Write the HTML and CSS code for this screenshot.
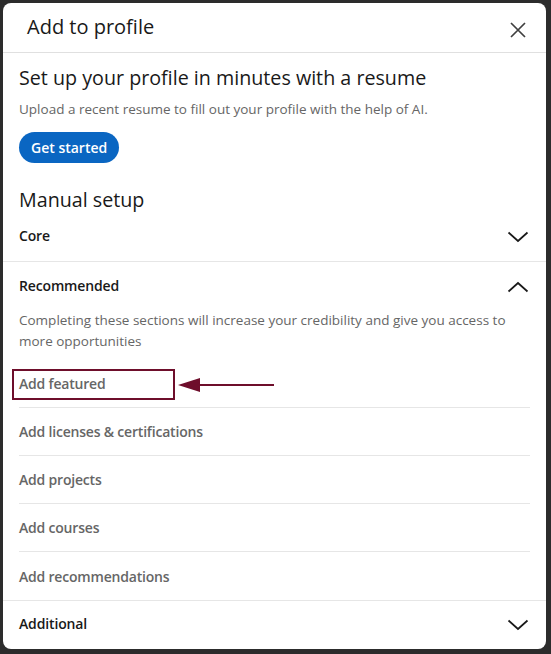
FILE: index.html
```html
<!DOCTYPE html>
<html>
<head>
<meta charset="utf-8">
<link rel="stylesheet" href="styles.css">
</head>
<body>
<div class="backdrop">
  <div class="modal">
    <div class="modal-header">
      <h2 class="modal-title">Add to profile</h2>
      <button class="close-btn" aria-label="Close">
        <svg width="18" height="18" viewBox="0 0 18 18"><path d="M2 2 L16 16 M16 2 L2 16" stroke="#404040" stroke-width="1.7" fill="none"/></svg>
      </button>
    </div>
    <div class="modal-body">
      <section class="resume">
        <h3 class="section-title">Set up your profile in minutes with a resume</h3>
        <p class="muted">Upload a recent resume to fill out your profile with the help of AI.</p>
        <button class="primary-btn">Get started</button>
      </section>
      <h3 class="section-title manual">Manual setup</h3>
      <div class="group core">
        <div class="group-head">
          <span>Core</span>
          <svg class="chev" width="22" height="12" viewBox="0 0 22 12"><path d="M1.5 1.5 L11 10 L20.5 1.5" stroke="#191919" stroke-width="1.7" fill="none"/></svg>
        </div>
      </div>
      <div class="group open">
        <div class="group-head">
          <span>Recommended</span>
          <svg class="chev" width="22" height="12" viewBox="0 0 22 12"><path d="M1.5 10.5 L11 2 L20.5 10.5" stroke="#191919" stroke-width="1.7" fill="none"/></svg>
        </div>
        <p class="muted desc">Completing these sections will increase your credibility and give you access to more opportunities</p>
        <ul class="items">
          <li class="item highlighted">Add featured
            <span class="mark-box"></span>
            <span class="mark-arrow"><span class="arrow-head"></span><span class="arrow-line"></span></span>
          </li>
          <li class="item">Add licenses &amp; certifications</li>
          <li class="item">Add projects</li>
          <li class="item">Add courses</li>
          <li class="item">Add recommendations</li>
        </ul>
      </div>
      <div class="group last">
        <div class="group-head">
          <span>Additional</span>
          <svg class="chev" width="22" height="12" viewBox="0 0 22 12"><path d="M1.5 1.5 L11 10 L20.5 1.5" stroke="#191919" stroke-width="1.7" fill="none"/></svg>
        </div>
      </div>
    </div>
  </div>
</div>
</body>
</html>
```

FILE: styles.css
```css
* { box-sizing: border-box; }
html, body { margin: 0; padding: 0; }
body {
  width: 551px;
  height: 654px;
  overflow: hidden;
  background: #2c2c2c;
  font-family: "Open Sans", "Noto Sans", sans-serif;
  color: #191919;
}
.backdrop {
  padding: 3px 5px 5px 3px;
  height: 654px;
}
.modal {
  width: 543px;
  height: 646px;
  background: #fff;
  border-radius: 8px;
  overflow: hidden;
  display: flex;
  flex-direction: column;
}
.modal-header {
  flex-shrink: 0;
  height: 50px;
  border-bottom: 1px solid #e0e0e0;
  display: flex;
  align-items: center;
  justify-content: space-between;
  padding: 0 18px 0 24px;
}
.modal-title {
  margin: 0;
  font-size: 20px;
  font-weight: 500;
  color: #191919;
  position: relative;
  top: -1px;
}
.close-btn {
  border: 0;
  background: none;
  padding: 0;
  width: 20px;
  height: 20px;
  display: flex;
  align-items: center;
  justify-content: center;
  margin-top: 4px;
}
.modal-body {
  flex-shrink: 0;
  padding: 0 16px;
}
.resume { padding-top: 12px; }
.section-title {
  margin: 0;
  font-size: 19.7px;
  font-weight: 500;
  line-height: 26px;
  color: #191919;
}
.muted {
  margin: 0;
  font-size: 13.5px;
  color: #666;
  line-height: 21px;
}
.resume .muted { margin-top: 8px; }
.primary-btn {
  margin-top: 12px;
  height: 31px;
  padding: 0 12px;
  border: 0;
  border-radius: 16px;
  background: #0a66c2;
  color: #fff;
  font-family: inherit;
  font-size: 14px;
  font-weight: 600;
  display: block;
}
.manual { margin-top: 24px; }
.group { margin: 0 -16px; padding: 0 16px; border-bottom: 1px solid #e6e6e6; }
.group.last { border-bottom: 0; }
.group-head {
  height: 48px;
  display: flex;
  align-items: center;
  justify-content: space-between;
  font-size: 14px;
  font-weight: 600;
  letter-spacing: -0.15px;
  color: #191919;
}
.core .group-head { padding-bottom: 4px; }
.open .group-head { padding-bottom: 2px; }
.last .group-head { padding-bottom: 3px; }
.chev { margin-right: 1px; margin-top: 3px; }
.desc { margin-top: 0; }
.items {
  list-style: none;
  margin: 8px 0 0;
  padding: 0;
}
.item {
  height: 48px;
  display: flex;
  align-items: center;
  font-size: 14px;
  font-weight: 600;
  letter-spacing: -0.2px;
  color: #666;
  border-bottom: 1px solid #e6e6e6;
  position: relative;
}
.item:last-child { border-bottom: 0; }
.mark-box {
  position: absolute;
  left: -7px;
  top: 9px;
  width: 163px;
  height: 31px;
  border: 2px solid #6e0e2b;
}
.mark-arrow {
  position: absolute;
  left: 159px;
  top: 18px;
  display: flex;
  align-items: center;
}
.arrow-head {
  width: 0;
  height: 0;
  border-top: 7px solid transparent;
  border-bottom: 7px solid transparent;
  border-right: 22px solid #6e0e2b;
}
.arrow-line {
  width: 74px;
  height: 2px;
  background: #6e0e2b;
}
```
